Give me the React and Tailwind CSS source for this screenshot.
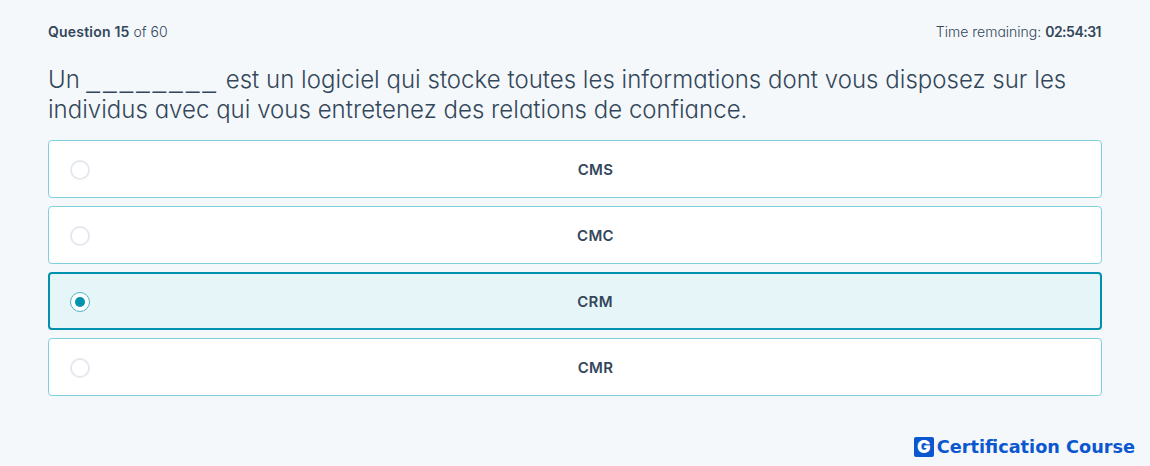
const options = [
  { label: 'CMS' },
  { label: 'CMC' },
  { label: 'CRM', selected: true },
  { label: 'CMR' },
]

function Option({ label, selected }) {
  return (
    <div className={selected
      ? 'flex items-center h-[58px] pt-[2px] rounded-[4px] border-2 border-[#0091ae] bg-[#e5f5f8] pl-[20px]'
      : 'flex items-center h-[58px] pt-[2px] rounded-[4px] border border-[#7fd1de] bg-white pl-[21px]'}>
      {selected ? (
        <span className="flex items-center justify-center w-5 h-5 shrink-0 rounded-full border border-[#4fb3c8] bg-white">
          <span className="w-2.5 h-2.5 rounded-full bg-[#0091ae]" />
        </span>
      ) : (
        <span className="w-5 h-5 shrink-0 rounded-full border-2 border-[#e4e8ef] bg-white" />
      )}
      <span className="flex-1 text-center text-[15px] font-semibold tracking-[0.3px] text-[#33475b]">{label}</span>
    </div>
  )
}

export default function App() {
  return (
    <div className="flex flex-col h-[466px] bg-[#f5f8fa] text-[#33475b] overflow-hidden font-['Inter',sans-serif] [font-feature-settings:'cv11']">
      <div className="px-12 pt-6">
        <div className="flex items-center justify-between h-4 text-sm font-light">
          <p><span className="font-semibold tracking-[0.2px]">Question 15</span> of 60</p>
          <p>Time remaining: <span className="font-semibold tracking-[-0.5px] pr-px">02:54:31</span></p>
        </div>
        <h1 className="mt-[25px] text-[24px] leading-[30px] font-[350] tracking-[0.02px]">
          Un <span className="font-['Liberation_Sans',sans-serif] tracking-[3.2px]">________</span> est un logiciel qui stocke toutes les informations dont vous disposez sur les<br />
          individus avec qui vous entretenez des relations de confiance.
        </h1>
        <div className="mt-[15px] flex flex-col gap-2">
          {options.map(o => <Option key={o.label} {...o} />)}
        </div>
      </div>
      <div className="mt-auto flex items-center justify-end gap-[3px] pr-[15px] pb-[9px]">
        <span className="flex items-center justify-center w-5 h-5 rounded-[2px] bg-[#0b57d0] text-white text-[18px] leading-none font-black">G</span>
        <span className="font-['DejaVu_Sans',sans-serif] text-[17.7px] leading-5 font-bold text-[#0b57d0]">Certification Course</span>
      </div>
    </div>
  )
}
